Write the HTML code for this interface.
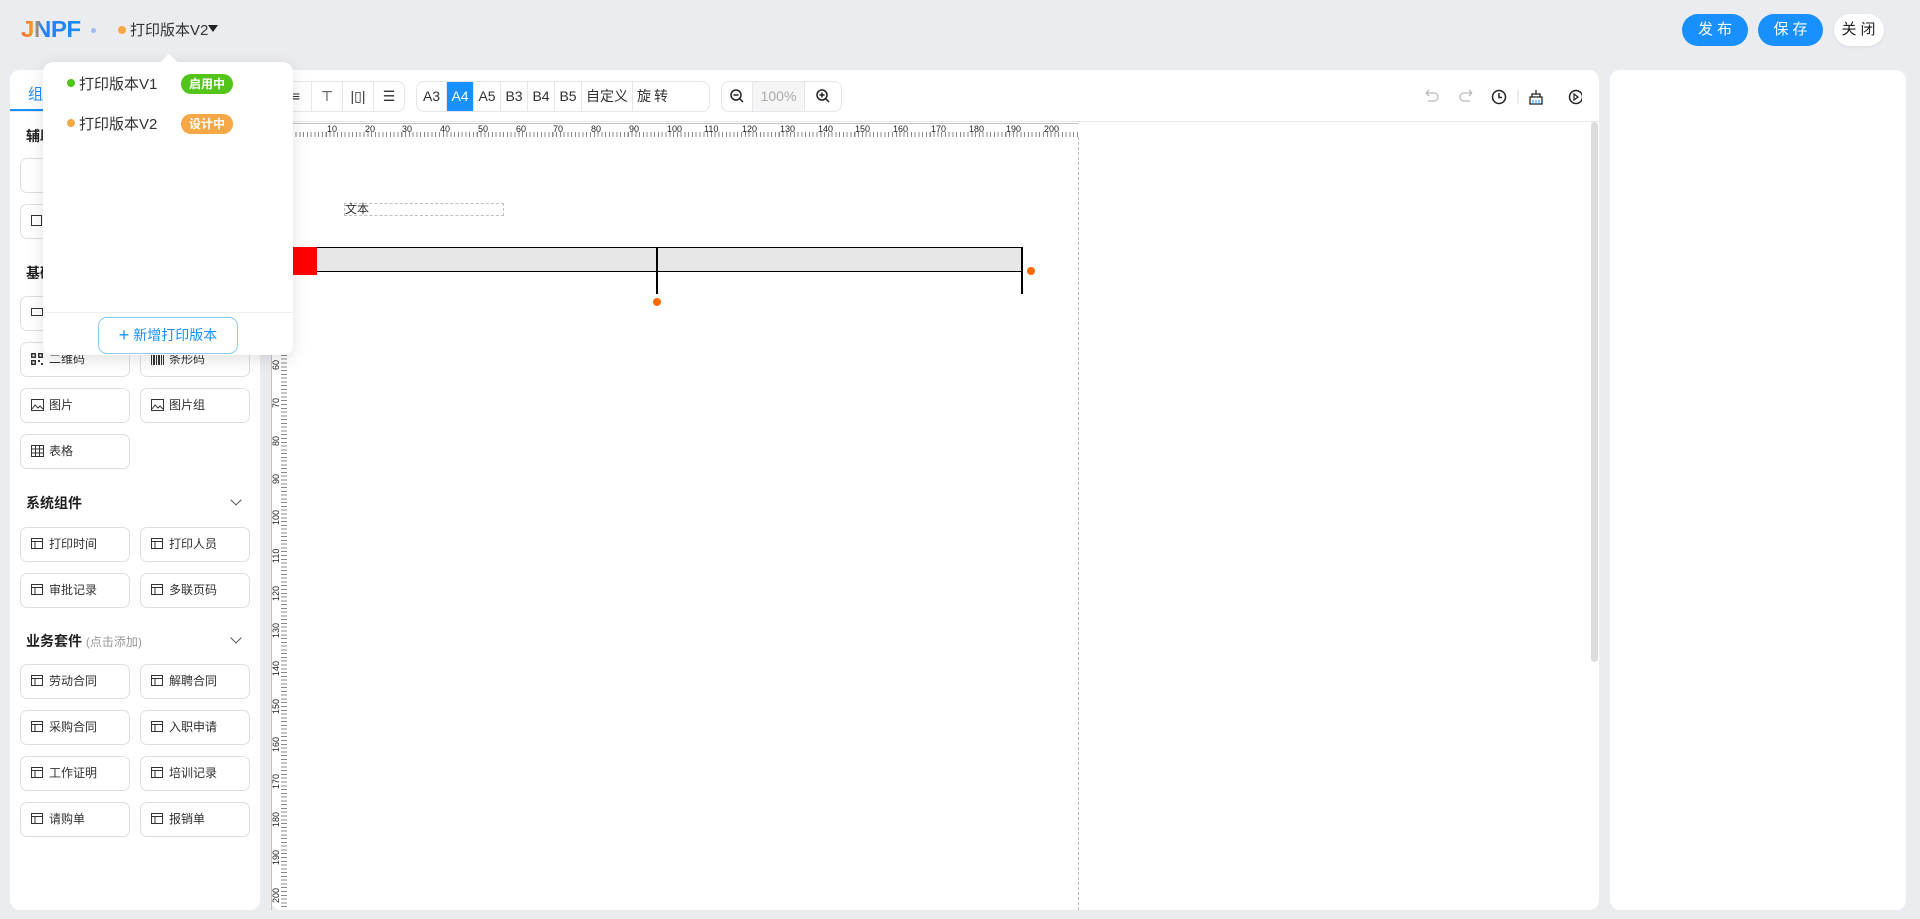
<!DOCTYPE html>
<html><head><meta charset="utf-8"><style>
*{box-sizing:border-box;margin:0;padding:0}
body{width:1920px;height:919px;background:#ebecf0;font-family:"Liberation Sans","Noto Sans CJK SC",sans-serif;position:relative;overflow:hidden;color:#303133}
.a{position:absolute}
.btn{position:absolute;top:14px;height:32px;border-radius:16px;font-size:15px;letter-spacing:4px;text-align:center;line-height:32px;padding-left:4px}
.panel{position:absolute;background:#fff;border-radius:10px}
.item{position:absolute;width:110px;height:35px;border:1px solid #dcdfe6;border-radius:7px;font-size:12px;line-height:33px;padding-left:28px;color:#303133}
.item svg{position:absolute;left:10px;top:10px}
.sec{position:absolute;left:26px;font-size:14px;font-weight:bold;color:#1f1f1f}
.chev{position:absolute;left:232px;width:8px;height:8px;border-right:1.5px solid #555;border-bottom:1.5px solid #555;transform:rotate(45deg)}
.grp{position:absolute;top:81px;height:31px;border:1px solid #e4e6eb;border-radius:8px;display:flex;overflow:hidden;background:#fff}
.grp div{height:29px;border-right:1px solid #e4e6eb;font-size:14px;line-height:29px;text-align:center;color:#303133}
.grp div:last-child{border-right:none}
.hl{position:absolute;top:124px;font-size:9px;color:#222}
.vl{position:absolute;left:271px;font-size:9px;color:#222;transform:rotate(-90deg);transform-origin:left top}
</style></head><body>

<!-- header -->
<div class="a" style="left:21px;top:16px;font-size:23px;font-weight:bold;letter-spacing:-0.5px;background:linear-gradient(90deg,#f5612a 0%,#f59b2a 20%,#2a7ef5 35%,#1a8ef0 100%);-webkit-background-clip:text;color:transparent;transform:scaleX(1.05);transform-origin:left">JNPF</div>
<div class="a" style="left:91px;top:28px;width:5px;height:5px;border-radius:50%;background:#9bbcf3"></div>
<div class="a" style="left:118px;top:26px;width:8px;height:8px;border-radius:50%;background:#f5a845"></div>
<div class="a" style="left:130px;top:19px;font-size:15px;color:#303133">打印版本V2</div>
<div class="a" style="left:208px;top:25px;width:0;height:0;border-left:5px solid transparent;border-right:5px solid transparent;border-top:7px solid #222"></div>
<div class="btn" style="left:1682px;width:66px;background:#1890ff;color:#fff">发布</div>
<div class="btn" style="left:1758px;width:65px;background:#1890ff;color:#fff">保存</div>
<div class="btn" style="left:1834px;width:49px;background:#fff;color:#222;box-shadow:0 1px 3px rgba(0,0,0,.08);width:50px;padding-left:3px">关闭</div>

<!-- left panel -->
<div class="panel" style="left:10px;top:70px;width:250px;height:840px">
  <div class="a" style="left:18px;top:13px;font-size:15px;color:#1890ff">组件</div>
  <div class="a" style="left:0;top:39px;width:120px;height:2px;background:#1890ff"></div>
  <div class="a" style="left:0;top:41px;width:250px;height:1px;background:#e8e8e8"></div>
</div>
<div class="sec" style="top:126px">辅助</div>
<div class="item" style="left:20px;top:158px">—</div>
<div class="item" style="left:20px;top:204px"><svg width="11" height="11"><rect x=".5" y=".5" width="10" height="10" fill="none" stroke="#333"/></svg></div>
<div class="sec" style="top:263px">基础</div>
<div class="item" style="left:20px;top:296px"><svg width="12" height="10"><rect x=".5" y="1.5" width="11" height="7" fill="none" stroke="#333"/></svg></div>
<div class="item" style="left:20px;top:342px"><svg width="12" height="12"><path d="M0 0h5v5H0zM7 0h5v5H7zM0 7h5v5H0zM7 7h2v2H7zM10 10h2v2h-2z" fill="#333"/><path d="M1.5 1.5h2v2h-2zM8.5 1.5h2v2h-2zM1.5 8.5h2v2h-2z" fill="#fff"/></svg>二维码</div>
<div class="item" style="left:140px;top:342px"><svg width="13" height="12"><path d="M0 0h1v12H0zM2 0h2v12H2zM5 0h1v12H5zM7 0h2v12H7zM10 0h1v12h-1zM12 0h1v12h-1z" fill="#333"/></svg>条形码</div>
<div class="item" style="left:20px;top:388px"><svg width="13" height="12"><rect x=".5" y=".5" width="12" height="11" fill="none" stroke="#333"/><path d="M1 10l3-4 3 3 2-2 3 3" fill="none" stroke="#333"/></svg>图片</div>
<div class="item" style="left:140px;top:388px"><svg width="13" height="12"><rect x=".5" y=".5" width="12" height="11" fill="none" stroke="#333"/><path d="M1 10l3-4 3 3 2-2 3 3" fill="none" stroke="#333"/></svg>图片组</div>
<div class="item" style="left:20px;top:434px"><svg width="13" height="12"><rect x=".5" y=".5" width="12" height="11" fill="none" stroke="#333"/><path d="M0 4h13M0 8h13M4.5 0v12M8.5 0v12" stroke="#333"/></svg>表格</div>
<div class="sec" style="top:493px">系统组件</div><div class="chev" style="top:496px"></div>
<div class="sec" style="top:631px">业务套件 <span style="font-weight:normal;font-size:12px;color:#999">(点击添加)</span></div><div class="chev" style="top:634px"></div>

<!-- canvas panel -->
<div class="panel" style="left:271px;top:70px;width:1328px;height:840px;overflow:hidden">
  <div class="a" style="left:0;top:51px;width:1328px;height:1px;background:#e8e8e8"></div>
  <div class="a" style="left:1320px;top:52px;width:7px;height:540px;background:#dcdcdc;border-radius:4px"></div>
</div>
<!-- toolbar groups -->
<div class="grp" style="left:280px;width:125px"><div style="width:31px">≡</div><div style="width:31px">⊤</div><div style="width:31px">|▯|</div><div style="width:30px">☰</div></div>
<div class="grp" style="left:416px;width:294px"><div style="width:30px">A3</div><div style="width:27px;background:#1890ff;color:#fff">A4</div><div style="width:27px">A5</div><div style="width:27px">B3</div><div style="width:27px">B4</div><div style="width:27px">B5</div><div style="width:51px">自定义</div><div style="width:42px;letter-spacing:3px">旋转</div></div>
<div class="grp" style="left:721px;width:121px"><div style="width:31px"><svg width="14" height="14" style="margin-top:7px"><circle cx="6" cy="6" r="5" fill="none" stroke="#222" stroke-width="1.5"/><path d="M3.5 6h5M10 10l3 3" stroke="#222" stroke-width="1.5"/></svg></div><div style="width:52px;background:#f5f5f5;color:#aaa">100%</div><div style="width:36px"><svg width="14" height="14" style="margin-top:7px"><circle cx="6" cy="6" r="5" fill="none" stroke="#222" stroke-width="1.5"/><path d="M3.5 6h5M6 3.5v5M10 10l3 3" stroke="#222" stroke-width="1.5"/></svg></div></div>
<!-- right icons -->
<svg class="a" style="left:1422px;top:88px" width="160" height="18">
 <path d="M4 5h8a4 4 0 0 1 0 8H6M4 5l3-3M4 5l3 3" fill="none" stroke="#bbb" stroke-width="1.3"/>
 <path d="M50 5h-8a4 4 0 0 0 0 8h6M50 5l-3-3M50 5l-3 3" fill="none" stroke="#bbb" stroke-width="1.3"/>
 <circle cx="77" cy="9" r="6.5" fill="none" stroke="#222" stroke-width="1.5"/><path d="M77 5v4.5h3" fill="none" stroke="#222" stroke-width="1.5"/>
 <path d="M96 2v14" stroke="#ddd"/>
 <path d="M114 2v4M110 6h8v3h-8zM108 9h12v7h-12z" fill="none" stroke="#222" stroke-width="1.3"/><path d="M111 12v4M114 12v4M117 12v4" stroke="#1890ff"/>
 <circle cx="154" cy="9" r="6.5" fill="none" stroke="#222" stroke-width="1.5"/><path d="M152 6v6l4-3z" fill="none" stroke="#222" stroke-width="1.2"/>
</svg>

<!-- rulers -->
<div class="a" style="left:288px;top:123px;width:790px;height:14px;border-top:1px solid #c8c0c4;background:repeating-linear-gradient(90deg,#888 0 1px,transparent 1px 3.775px) 0 8px/100% 6px no-repeat"></div>
<div class="a" style="left:271px;top:136px;width:16px;height:774px;border-left:1px solid #c8c0c4;background:repeating-linear-gradient(180deg,#888 0 1px,transparent 1px 3.775px) 9px 0/7px 100% no-repeat"></div>
<!-- page border -->
<div class="a" style="left:1078px;top:137px;height:773px;border-left:1px dashed #bbb"></div>

<!-- elements -->
<div class="a" style="left:344px;top:203px;width:160px;height:13px;border:1px dashed #c8bcc4;font-size:12px;line-height:11px">文本</div>
<div class="a" style="left:293px;top:247px;width:730px;height:25px;background:#e6e6e6;border-top:1.5px solid #000;border-bottom:1.5px solid #000"></div>
<div class="a" style="left:293px;top:247px;width:24px;height:28px;background:#f00"></div>
<div class="a" style="left:656px;top:247px;width:1.5px;height:47px;background:#000"></div>
<div class="a" style="left:1021px;top:247px;width:1.5px;height:47px;background:#000"></div>
<div class="a" style="left:653px;top:298px;width:8px;height:8px;border-radius:50%;background:#ff6a00"></div>
<div class="a" style="left:1027px;top:267px;width:8px;height:8px;border-radius:50%;background:#ff6a00"></div>

<!-- right panel -->
<div class="panel" style="left:1610px;top:70px;width:296px;height:840px"></div>

<div class="item" style="left:20px;top:527px"><svg width="12" height="11"><rect x=".5" y=".5" width="11" height="10" fill="none" stroke="#333"/><path d="M0 3.5h12M4 3.5v7" stroke="#333"/></svg>打印时间</div>
<div class="item" style="left:140px;top:527px"><svg width="12" height="11"><rect x=".5" y=".5" width="11" height="10" fill="none" stroke="#333"/><path d="M0 3.5h12M4 3.5v7" stroke="#333"/></svg>打印人员</div>
<div class="item" style="left:20px;top:573px"><svg width="12" height="11"><rect x=".5" y=".5" width="11" height="10" fill="none" stroke="#333"/><path d="M0 3.5h12M4 3.5v7" stroke="#333"/></svg>审批记录</div>
<div class="item" style="left:140px;top:573px"><svg width="12" height="11"><rect x=".5" y=".5" width="11" height="10" fill="none" stroke="#333"/><path d="M0 3.5h12M4 3.5v7" stroke="#333"/></svg>多联页码</div>
<div class="item" style="left:20px;top:664px"><svg width="12" height="11"><rect x=".5" y=".5" width="11" height="10" fill="none" stroke="#333"/><path d="M0 3.5h12M4 3.5v7" stroke="#333"/></svg>劳动合同</div>
<div class="item" style="left:140px;top:664px"><svg width="12" height="11"><rect x=".5" y=".5" width="11" height="10" fill="none" stroke="#333"/><path d="M0 3.5h12M4 3.5v7" stroke="#333"/></svg>解聘合同</div>
<div class="item" style="left:20px;top:710px"><svg width="12" height="11"><rect x=".5" y=".5" width="11" height="10" fill="none" stroke="#333"/><path d="M0 3.5h12M4 3.5v7" stroke="#333"/></svg>采购合同</div>
<div class="item" style="left:140px;top:710px"><svg width="12" height="11"><rect x=".5" y=".5" width="11" height="10" fill="none" stroke="#333"/><path d="M0 3.5h12M4 3.5v7" stroke="#333"/></svg>入职申请</div>
<div class="item" style="left:20px;top:756px"><svg width="12" height="11"><rect x=".5" y=".5" width="11" height="10" fill="none" stroke="#333"/><path d="M0 3.5h12M4 3.5v7" stroke="#333"/></svg>工作证明</div>
<div class="item" style="left:140px;top:756px"><svg width="12" height="11"><rect x=".5" y=".5" width="11" height="10" fill="none" stroke="#333"/><path d="M0 3.5h12M4 3.5v7" stroke="#333"/></svg>培训记录</div>
<div class="item" style="left:20px;top:802px"><svg width="12" height="11"><rect x=".5" y=".5" width="11" height="10" fill="none" stroke="#333"/><path d="M0 3.5h12M4 3.5v7" stroke="#333"/></svg>请购单</div>
<div class="item" style="left:140px;top:802px"><svg width="12" height="11"><rect x=".5" y=".5" width="11" height="10" fill="none" stroke="#333"/><path d="M0 3.5h12M4 3.5v7" stroke="#333"/></svg>报销单</div>

<!-- dropdown -->
<div class="a" style="left:43px;top:62px;width:250px;height:293px;background:#fff;border-radius:10px;box-shadow:0 4px 16px rgba(0,0,0,.12)">
  <div class="a" style="left:120px;top:-6px;width:12px;height:12px;background:#fff;transform:rotate(45deg)"></div>
  <div class="a" style="left:24px;top:17px;width:8px;height:8px;border-radius:50%;background:#52c41a"></div>
  <div class="a" style="left:36px;top:11px;font-size:15px">打印版本V1</div>
  <div class="a" style="left:138px;top:12px;width:52px;height:20px;border-radius:10px;background:#52c41a;color:#fff;font-size:12px;font-weight:bold;text-align:center;line-height:20px">启用中</div>
  <div class="a" style="left:24px;top:57px;width:8px;height:8px;border-radius:50%;background:#f5a845"></div>
  <div class="a" style="left:36px;top:51px;font-size:15px">打印版本V2</div>
  <div class="a" style="left:138px;top:52px;width:52px;height:20px;border-radius:10px;background:#f5a845;color:#fff;font-size:12px;font-weight:bold;text-align:center;line-height:20px">设计中</div>
  <div class="a" style="left:0;top:250px;width:250px;height:1px;background:#eee"></div>
  <div class="a" style="left:55px;top:255px;width:140px;height:37px;border:1.5px solid #8ccaff;border-radius:9px;color:#1890ff;font-size:14px;text-align:center;line-height:34px"><span style="font-size:18px;vertical-align:-1px">+</span> 新增打印版本</div>
</div>

<!-- ruler labels -->
<span class="hl" style="left:327px">10</span><span class="hl" style="left:365px">20</span><span class="hl" style="left:402px">30</span><span class="hl" style="left:440px">40</span><span class="hl" style="left:478px">50</span><span class="hl" style="left:516px">60</span><span class="hl" style="left:553px">70</span><span class="hl" style="left:591px">80</span><span class="hl" style="left:629px">90</span><span class="hl" style="left:667px">100</span><span class="hl" style="left:704px">110</span><span class="hl" style="left:742px">120</span><span class="hl" style="left:780px">130</span><span class="hl" style="left:818px">140</span><span class="hl" style="left:855px">150</span><span class="hl" style="left:893px">160</span><span class="hl" style="left:931px">170</span><span class="hl" style="left:969px">180</span><span class="hl" style="left:1006px">190</span><span class="hl" style="left:1044px">200</span>
<span class="vl" style="top:370px">60</span><span class="vl" style="top:408px">70</span><span class="vl" style="top:446px">80</span><span class="vl" style="top:484px">90</span><span class="vl" style="top:525px">100</span><span class="vl" style="top:563px">110</span><span class="vl" style="top:601px">120</span><span class="vl" style="top:638px">130</span><span class="vl" style="top:676px">140</span><span class="vl" style="top:714px">150</span><span class="vl" style="top:752px">160</span><span class="vl" style="top:789px">170</span><span class="vl" style="top:827px">180</span><span class="vl" style="top:865px">190</span><span class="vl" style="top:903px">200</span>
</body></html>
